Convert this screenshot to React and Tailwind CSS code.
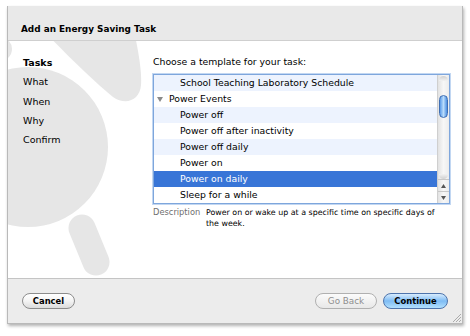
import React from "react";

const rows = [
  { label: "School Teaching Laboratory Schedule", indent: true },
  { label: "Power Events", group: true },
  { label: "Power off", indent: true },
  { label: "Power off after inactivity", indent: true },
  { label: "Power off daily", indent: true },
  { label: "Power on", indent: true },
  { label: "Power on daily", indent: true, selected: true },
  { label: "Sleep for a while", indent: true },
];

const steps = ["Tasks", "What", "When", "Why", "Confirm"];

// big faint logo behind the content
const Watermark = () => (
  <svg
    className="absolute left-0 top-0"
    width="455"
    height="237"
    viewBox="8 41 455 237"
  >
    <g fill="#e6e6e6">
      <circle cx="28" cy="147" r="80" />
      <circle cx="0" cy="49" r="12" />
      <path d="M38 25 L133 25 C138 50 142 70 141 85 C140 100 126 106 113 97 C92 80 62 50 38 25 Z" />
      <line x1="82" y1="228" x2="96" y2="262" stroke="#e6e6e6" strokeWidth="27" strokeLinecap="round" />
    </g>
  </svg>
);

const Scrollbar = () => (
  <div className="w-[12px] flex flex-col bg-gradient-to-r from-[#e2e2e2] via-[#f7f7f7] to-[#ececec] border-l border-[#cfcfcf]">
    <div className="h-[5px] mx-[1px] mt-[1px] rounded-t-full bg-gradient-to-b from-[#d0d0d0] to-[#f2f2f2]" />
    <div className="mt-[14px] mx-[1px] h-[23px] rounded-full border border-[#3f6fb5] bg-gradient-to-r from-[#5b9be8] via-[#b9dcfb] to-[#4a8de0]" />
    <div className="flex-1" />
    <div className="h-[5px] mx-[1px] rounded-b-full bg-gradient-to-b from-[#f2f2f2] to-[#d0d0d0]" />
    <div className="h-[12px] flex items-center justify-center border-t border-[#c8c8c8]">
      <svg width="5" height="4" viewBox="0 0 5 4">
        <polygon points="2.5,0 5,4 0,4" fill="#555" />
      </svg>
    </div>
    <div className="h-[12px] flex items-center justify-center border-t border-[#c8c8c8]">
      <svg width="5" height="4" viewBox="0 0 5 4">
        <polygon points="0,0 5,0 2.5,4" fill="#555" />
      </svg>
    </div>
  </div>
);

export default function App() {
  return (
    <div className="w-[470px] h-[336px] bg-white pt-[6px] pl-[7px] font-['DejaVu_Sans',sans-serif] text-black overflow-hidden">
      <div className="w-[456px] h-[318px] flex flex-col border-x border-b border-[#b9b9b9] shadow-[1px_2px_3px_rgba(0,0,0,0.3)]">
        {/* header */}
        <div className="h-[35px] bg-[#e9e9e9] border-b border-[#cfcfcf] pl-[13px] pt-[17px]">
          <div className="text-[8.9px] leading-[13px] font-bold">Add an Energy Saving Task</div>
        </div>

        {/* content */}
        <div className="relative h-[237px] bg-white overflow-hidden flex">
          <Watermark />
          <div className="relative w-[145px] pl-[15px] pt-[12px] text-[9.5px] leading-[19.25px]">
            {steps.map((s, i) => (
              <div key={s} className={i === 0 ? "font-bold" : ""}>
                {s}
              </div>
            ))}
          </div>

          <div className="relative w-[297px] pt-[14px]">
            <div className="text-[9.3px] leading-[13px]">Choose a template for your task:</div>
            <div className="mt-[6px] h-[130px] flex border border-[#7ea6dc] shadow-[0_0_0_1px_#c2d7f2] bg-white">
              <div className="flex-1 flex flex-col">
                {rows.map((r, i) => (
                  <div
                    key={r.label}
                    className={
                      "h-[16px] leading-[16px] text-[9.3px] flex items-center whitespace-nowrap " +
                      (r.selected
                        ? "bg-[#3875d7] text-white"
                        : i % 2 === 0
                        ? "bg-[#edf3fe]"
                        : "bg-white") +
                      (r.group ? " pl-[3px]" : " pl-[26px]")
                    }
                  >
                    {r.group && (
                      <svg className="mr-[6px]" width="6" height="5" viewBox="0 0 6 5">
                        <polygon points="0,0 6,0 3,5" fill="#8a8a8a" />
                      </svg>
                    )}
                    {r.label}
                  </div>
                ))}
              </div>
              <Scrollbar />
            </div>
            <div className="mt-[3px] flex leading-[11px]">
              <div className="w-[53px] text-[8.3px] text-[#6f6f6f]">Description</div>
              <div className="w-[240px] text-[7.9px]">
                Power on or wake up at a specific time on specific days of the week.
              </div>
            </div>
          </div>
        </div>

        {/* footer */}
        <div className="relative h-[45px] bg-[#ececec] border-t border-[#c4c4c4] flex items-start pt-[14px] pl-[14px] pr-[14px]">
          <button className="w-[53px] h-[16px] rounded-full border border-[#8c8c8c] bg-gradient-to-b from-white via-[#f4f4f4] to-[#dcdcdc] text-[8.4px] font-bold leading-[14px]">
            Cancel
          </button>
          <div className="flex-1" />
          <button className="w-[62px] h-[16px] rounded-full border border-[#b0b0b0] bg-gradient-to-b from-[#fbfbfb] to-[#e8e8e8] text-[8.8px] text-[#8e8e8e] leading-[14px]">
            Go Back
          </button>
          <button className="ml-[6px] w-[65px] h-[16px] rounded-full border border-[#4e74ac] bg-gradient-to-b from-[#d8ecfd] via-[#7ebcf4] to-[#b3e0fd] text-[8.4px] font-bold leading-[14px]">
            Continue
          </button>
          <svg className="absolute right-[1px] bottom-[1px]" width="9" height="9" viewBox="0 0 9 9">
            <g stroke="#9a9a9a" strokeWidth="0.8">
              <line x1="1" y1="9" x2="9" y2="1" />
              <line x1="4" y1="9" x2="9" y2="4" />
              <line x1="7" y1="9" x2="9" y2="7" />
            </g>
          </svg>
        </div>
      </div>
    </div>
  );
}
